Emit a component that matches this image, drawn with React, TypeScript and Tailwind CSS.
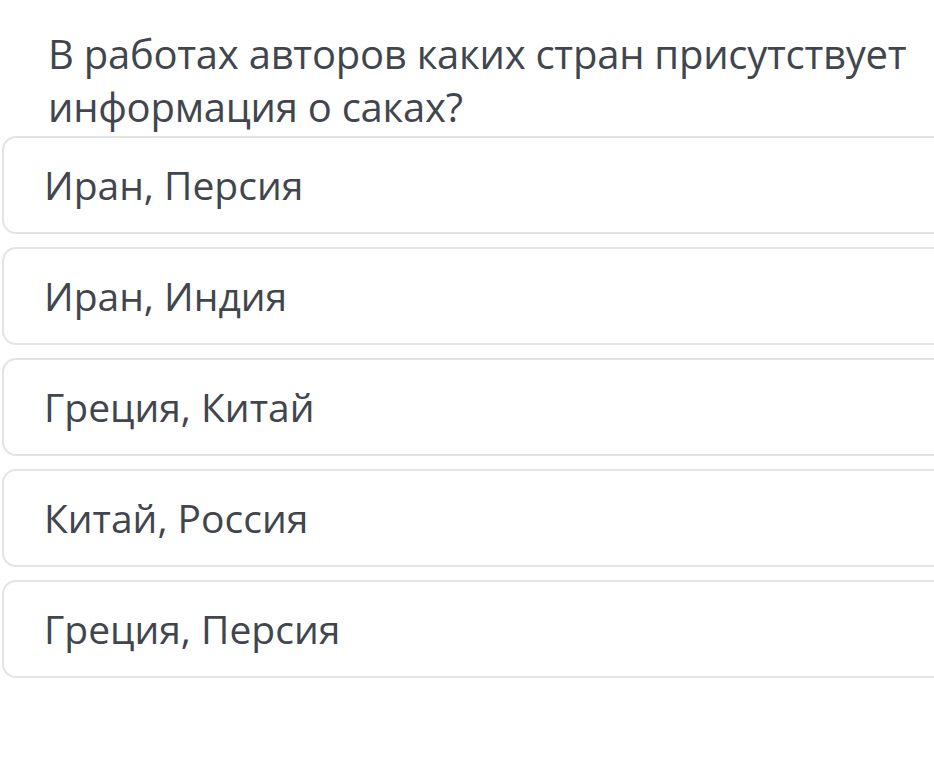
const answers = ["Иран, Персия", "Иран, Индия", "Греция, Китай", "Китай, Россия", "Греция, Персия"];

export default function App() {
  return (
    <div className="min-h-[779px] w-[934px] overflow-hidden bg-white font-['Open_Sans',sans-serif] text-[#41464e]">
      <h1 className="pl-[48px] pt-[27px] text-[40px] leading-[53px] font-normal tracking-[-0.25px]">
        В работах авторов каких стран присутствует информация о саках?
      </h1>
      <div className="mt-[3px] flex w-[1000px] flex-col gap-[13px] pl-[2px]">
        {answers.map((a) => (
          <div
            key={a}
            className="flex h-[98px] items-center rounded-[14px] border-2 border-[#e3e4e6] pl-[40px] text-[39px]"
          >
            {a}
          </div>
        ))}
      </div>
    </div>
  );
}
